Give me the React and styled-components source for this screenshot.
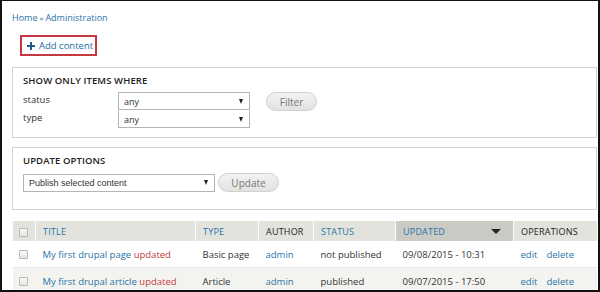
import React from "react";
import styled, { createGlobalStyle } from "styled-components";

const Global = createGlobalStyle`
  html, body { margin: 0; padding: 0; background: #fff; }
  body { width: 600px; height: 292px; overflow: hidden; font-family: "Open Sans", "DejaVu Sans", sans-serif; }
`;

const Frame = styled.div`
  box-sizing: border-box;
  width: 600px;
  height: 292px;
  border-top: 1px solid #111;
  border-left: 2px solid #111;
  border-right: 2px solid #111;
  border-bottom: 2px solid #111;
  padding: 0 1px 0 10px;
  overflow: hidden;
  background: #fff;
`;

const Breadcrumb = styled.div`
  font-size: 9px;
  color: #2d5f8a;
  padding: 10px 0 0 0;
  height: 13px;
  line-height: 13px;
`;

const Sep = styled.span`
  font-size: 8px;
  margin: 0 2px;
`;

const AddRow = styled.div`
  display: flex;
  padding: 14px 0 0 8px;
  height: 20px;
`;

const AddButton = styled.a`
  box-sizing: border-box;
  display: flex;
  align-items: center;
  gap: 4px;
  height: 21px;
  width: 77px;
  padding: 0 0 0 5px;
  margin-top: -3px;
  border: 2px solid #c4393f;
  color: #1f6b9c;
  font-size: 9.5px;
  white-space: nowrap;
  text-decoration: none;
`;

const Fieldset = styled.div`
  box-sizing: border-box;
  margin-top: ${p => p.$top}px;
  height: ${p => p.$h}px;
  border: 1px solid #d2d2d2;
  padding: 6px 10px 0 10px;
  background: #fff;
`;

const Legend = styled.div`
  font-size: 9.5px;
  font-weight: 600;
  color: #222;
  letter-spacing: 0.1px;
  height: 13px;
  line-height: 13px;
`;

const FilterGrid = styled.div`
  display: flex;
  align-items: flex-start;
  margin-top: 5px;
`;

const Labels = styled.div`
  display: grid;
  grid-template-columns: 95px 132px;
  grid-auto-rows: 18px;
`;

const Label = styled.div`
  font-size: 9.5px;
  color: #333;
  line-height: 15px;
`;

const Select = styled.div`
  box-sizing: border-box;
  width: ${p => p.$w}px;
  height: 18px;
  border: 1px solid #b4b4b4;
  border-top-color: ${p => (p.$shared ? "transparent" : "#b4b4b4")};
  display: flex;
  align-items: center;
  justify-content: space-between;
  padding: 0 6px 0 5px;
  font-size: 9px;
  color: #333;
  white-space: nowrap;
  font-family: ${p => (p.$arial ? '"Liberation Sans", Arial, sans-serif' : '"Open Sans", sans-serif')};
  background: #fff;
`;

const Arrow = styled.span`
  width: 0;
  height: 0;
  border-left: 2.5px solid transparent;
  border-right: 2.5px solid transparent;
  border-top: 5px solid #222;
`;

const Button = styled.button`
  box-sizing: border-box;
  height: 19px;
  width: ${p => p.$w}px;
  margin-left: ${p => p.$ml}px;
  border: 1px solid #d0d0d0;
  border-radius: 10px;
  background: linear-gradient(#f2f2f2, #e2e2e2);
  color: #777;
  font-size: 10px;
  font-family: "Open Sans", sans-serif;
  padding: 0;
`;

const UpdateRow = styled.div`
  display: flex;
  align-items: center;
  margin-top: 6px;
`;

const Table = styled.table`
  margin-top: 11px;
  width: 100%;
  border-collapse: collapse;
  font-size: 9.5px;
  table-layout: fixed;
`;

const Th = styled.th`
  height: 20px;
  padding: 0 0 0 ${p => (p.$pl ?? 7)}px;
  text-align: left;
  font-weight: 400;
  font-size: 9px;
  letter-spacing: 0.2px;
  color: ${p => (p.$link ? "#2b73a8" : "#222")};
  background: ${p => (p.$active ? "#cacbc5" : "#e2e3dd")};
  border-left: 1px solid ${p => (p.$first ? "transparent" : "#fdfdfd")};
  position: relative;
`;

const SortArrow = styled.span`
  position: absolute;
  right: 12px;
  top: 8px;
  width: 0;
  height: 0;
  border-left: 5px solid transparent;
  border-right: 5px solid transparent;
  border-top: 5px solid #222;
`;

const Tr = styled.tr`
  background: ${p => (p.$alt ? "#f3f4ef" : "#fff")};
  border-bottom: 1px solid #e6e6e6;
`;

const Td = styled.td`
  height: 26px;
  padding: 0 0 0 ${p => (p.$pl ?? 7)}px;
  color: #333;
  white-space: nowrap;
  overflow: hidden;
`;

const Link = styled.a`
  color: #2b73a8;
  text-decoration: none;
  margin-right: ${p => p.$mr || 0}px;
`;

const Updated = styled.span`
  color: #c43b3b;
`;

const Check = styled.span`
  display: inline-block;
  box-sizing: border-box;
  width: 9px;
  height: 9px;
  border: 1px solid #b8b8b8;
  border-radius: 1px;
  background: linear-gradient(#fafafa, #e6e6e6);
  vertical-align: middle;
`;

const Plus = () => (
  <svg width="8" height="8" viewBox="0 0 8 8">
    <path d="M3 0h2v3h3v2H5v3H3V5H0V3h3z" fill="#1f5a8a" />
  </svg>
);

const rows = [
  { title: "My first drupal page", type: "Basic page", status: "not published", date: "09/08/2015 - 10:31" },
  { title: "My first drupal article", type: "Article", status: "published", date: "09/07/2015 - 17:50" },
];

export default function App() {
  return (
    <>
      <Global />
      <Frame>
        <Breadcrumb>
          <Link>Home</Link>
          <Sep>»</Sep>
          <Link>Administration</Link>
        </Breadcrumb>
        <AddRow>
          <AddButton>
            <Plus />
            Add content
          </AddButton>
        </AddRow>
        <Fieldset $top={9} $h={71}>
          <Legend>SHOW ONLY ITEMS WHERE</Legend>
          <FilterGrid>
            <Labels>
              <Label>status</Label>
              <Select $w={132}>any<Arrow /></Select>
              <Label>type</Label>
              <Select $w={132} $shared>any<Arrow /></Select>
            </Labels>
            <Button $w={51} $ml={16}>Filter</Button>
          </FilterGrid>
        </Fieldset>
        <Fieldset $top={9} $h={63}>
          <Legend>UPDATE OPTIONS</Legend>
          <UpdateRow>
            <Select $w={192} $arial>Publish selected content<Arrow /></Select>
            <Button $w={61} $ml={3}>Update</Button>
          </UpdateRow>
        </Fieldset>
        <Table>
          <colgroup>
            <col style={{ width: 23 }} />
            <col style={{ width: 160 }} />
            <col style={{ width: 63 }} />
            <col style={{ width: 55 }} />
            <col style={{ width: 82 }} />
            <col style={{ width: 118 }} />
            <col />
          </colgroup>
          <thead>
            <tr>
              <Th $first $pl={6}><Check /></Th>
              <Th $link>TITLE</Th>
              <Th $link>TYPE</Th>
              <Th>AUTHOR</Th>
              <Th $link>STATUS</Th>
              <Th $link $active>UPDATED<SortArrow /></Th>
              <Th>OPERATIONS</Th>
            </tr>
          </thead>
          <tbody>
            {rows.map((r, i) => (
              <Tr key={i} $alt={i % 2 === 1}>
                <Td $pl={6}><Check /></Td>
                <Td><Link>{r.title}</Link> <Updated>updated</Updated></Td>
                <Td>{r.type}</Td>
                <Td><Link>admin</Link></Td>
                <Td>{r.status}</Td>
                <Td>{r.date}</Td>
                <Td><Link $mr={9}>edit</Link><Link>delete</Link></Td>
              </Tr>
            ))}
          </tbody>
        </Table>
      </Frame>
    </>
  );
}
